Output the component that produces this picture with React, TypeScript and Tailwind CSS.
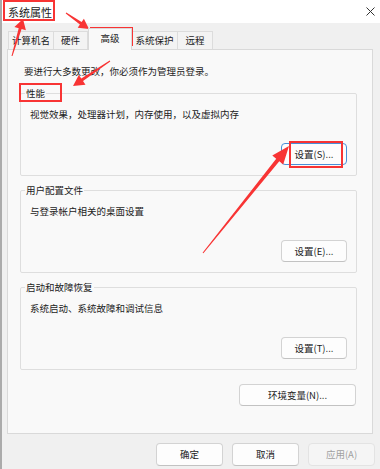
import React from 'react';

type Pt = [number, number];

// tapered annotation arrow, thin at the tail and a triangle head at the tip
function arrowPoints(tail: Pt, tip: Pt, headLen: number, headHalf: number, tailW: number, neckW: number) {
  const dx = tip[0] - tail[0];
  const dy = tip[1] - tail[1];
  const len = Math.hypot(dx, dy);
  const ux = dx / len;
  const uy = dy / len;
  const nx = -uy;
  const ny = ux;
  const bx = tip[0] - ux * headLen;
  const by = tip[1] - uy * headLen;
  const pts: Pt[] = [
    [tail[0] + (nx * tailW) / 2, tail[1] + (ny * tailW) / 2],
    [bx + (nx * neckW) / 2, by + (ny * neckW) / 2],
    [bx + nx * headHalf, by + ny * headHalf],
    tip,
    [bx - nx * headHalf, by - ny * headHalf],
    [bx - (nx * neckW) / 2, by - (ny * neckW) / 2],
    [tail[0] - (nx * tailW) / 2, tail[1] - (ny * tailW) / 2],
  ];
  return pts.map((p) => p.map((v) => v.toFixed(1)).join(',')).join(' ');
}

const arrows = [
  { tail: [12, 56] as Pt, tip: [23, 19] as Pt, head: 10, half: 6, tailW: 1, neck: 3 },
  { tail: [66, 13] as Pt, tip: [89, 29] as Pt, head: 10, half: 5.5, tailW: 1, neck: 3 },
  { tail: [110, 61] as Pt, tip: [73, 86] as Pt, head: 11, half: 6, tailW: 1, neck: 3 },
  { tail: [203, 253] as Pt, tip: [289, 146] as Pt, head: 18, half: 7, tailW: 1, neck: 4 },
];

const tabs = [
  { label: '计算机名', w: 'w-[46px]' },
  { label: '硬件', w: 'w-[35px]' },
  { label: '高级', w: 'w-[44px]', active: true },
  { label: '系统保护', w: 'w-[47px]' },
  { label: '远程', w: 'w-[36px]' },
];

const groups = [
  { title: '性能', desc: '视觉效果，处理器计划，内存使用，以及虚拟内存', btn: '设置(S)...', focused: true },
  { title: '用户配置文件', desc: '与登录帐户相关的桌面设置', btn: '设置(E)...' },
  { title: '启动和故障恢复', desc: '系统启动、系统故障和调试信息', btn: '设置(T)...' },
];

function Button({ label, className = '', focused = false, disabled = false }: { label: string; className?: string; focused?: boolean; disabled?: boolean }) {
  return (
    <button
      className={`flex h-[22px] items-center justify-center rounded-[4px] border text-[9.5px] leading-[13px] ${
        disabled
          ? 'border-[#e3e3e3] bg-[#f5f5f5] text-[#a0a0a0]'
          : focused
          ? 'border-[#4a8fd8] bg-[#fdfdfd] text-[#1b1b1b]'
          : 'border-[#d3d3d3] border-b-[#c2c2c2] bg-[#fdfdfd] text-[#1b1b1b]'
      } ${className}`}
    >
      {label}
    </button>
  );
}

export default function App() {
  return (
    <div className="relative flex h-[469px] w-[380px] overflow-hidden bg-[#f0f0f0] font-['Noto_Sans_CJK_SC',sans-serif] text-[#1b1b1b]">
      <div className="w-[2px] shrink-0 bg-[#ababab]" />
      <div className="flex flex-1 flex-col">
        {/* title bar */}
        <div className="flex h-[23px] items-center justify-between bg-white pl-[6px] pr-[5px]">
          <span className="text-[11px] leading-[14px]">系统属性</span>
          <svg width="9" height="9" viewBox="0 0 9 9" className="text-[#333]">
            <path d="M0.5 0.5 L8.5 8.5 M8.5 0.5 L0.5 8.5" stroke="currentColor" strokeWidth="1" />
          </svg>
        </div>

        <div className="flex flex-col pl-[5px] pr-[7px]">
          {/* tabs */}
          <div className="mt-[5px] flex h-[21px] items-end pl-[1px]">
            {tabs.map((t) =>
              t.active ? (
                <div
                  key={t.label}
                  className={`${t.w} relative z-10 -mb-px flex h-[22px] items-center justify-center border border-b-0 border-[#d9d9d9] bg-[#f9f9f9] pb-[2px] text-[9.5px] leading-[13px]`}
                >
                  {t.label}
                </div>
              ) : (
                <div
                  key={t.label}
                  className={`${t.w} -ml-px flex h-[18px] items-center justify-center border border-b-0 border-[#dcdcdc] bg-[#f3f3f3] text-[9.5px] leading-[13px] first:ml-0`}
                >
                  {t.label}
                </div>
              )
            )}
          </div>

          {/* panel */}
          <div className="flex h-[385px] flex-col border border-[#d9d9d9] bg-[#f9f9f9] pl-[12px] pr-[15px] pt-[15px]">
            <p className="pl-[4px] text-[9.5px] leading-[13px]">要进行大多数更改，你必须作为管理员登录。</p>
            <div className="mt-[9px] flex flex-col gap-[8px]">
              {groups.map((g) => (
                <fieldset key={g.title} className="h-[89px] rounded-[2px] border border-[#dedede] pl-[9px] pr-[9px]">
                  <legend className="-ml-[5px] px-[1px] text-[9.5px] leading-[13px]">{g.title}</legend>
                  <p className="mt-[8px] text-[9.5px] leading-[13px]">{g.desc}</p>
                  <div className="mt-[22px] flex justify-end">
                    <Button label={g.btn} focused={g.focused} className="w-[66px]" />
                  </div>
                </fieldset>
              ))}
            </div>
            <div className="mt-[14px] flex justify-end pr-[1px]">
              <Button label="环境变量(N)..." className="w-[117px]" />
            </div>
          </div>
        </div>

        {/* dialog buttons */}
        <div className="mt-[9px] flex justify-end gap-[9px] pr-[5px]">
          <Button label="确定" className="h-[23px] w-[67px]" />
          <Button label="取消" className="h-[23px] w-[67px]" />
          <Button label="应用(A)" disabled className="h-[23px] w-[67px]" />
        </div>
      </div>

      {/* red annotations */}
      <div className="pointer-events-none absolute left-[3px] top-0 h-[21px] w-[52px] border-2 border-[#f83434]" />
      <div className="pointer-events-none absolute left-[90px] top-[27px] h-[19px] w-[43px] border-2 border-[#f83434]" />
      <div className="pointer-events-none absolute left-[19px] top-[83px] h-[19px] w-[43px] border-2 border-[#f83434]" />
      <div className="pointer-events-none absolute left-[289px] top-[141px] h-[27px] w-[54px] border-2 border-[#f83434]" />
      <svg className="pointer-events-none absolute inset-0" width="380" height="469">
        {arrows.map((a, i) => (
          <polygon key={i} points={arrowPoints(a.tail, a.tip, a.head, a.half, a.tailW, a.neck)} fill="#f83434" />
        ))}
      </svg>
    </div>
  );
}
